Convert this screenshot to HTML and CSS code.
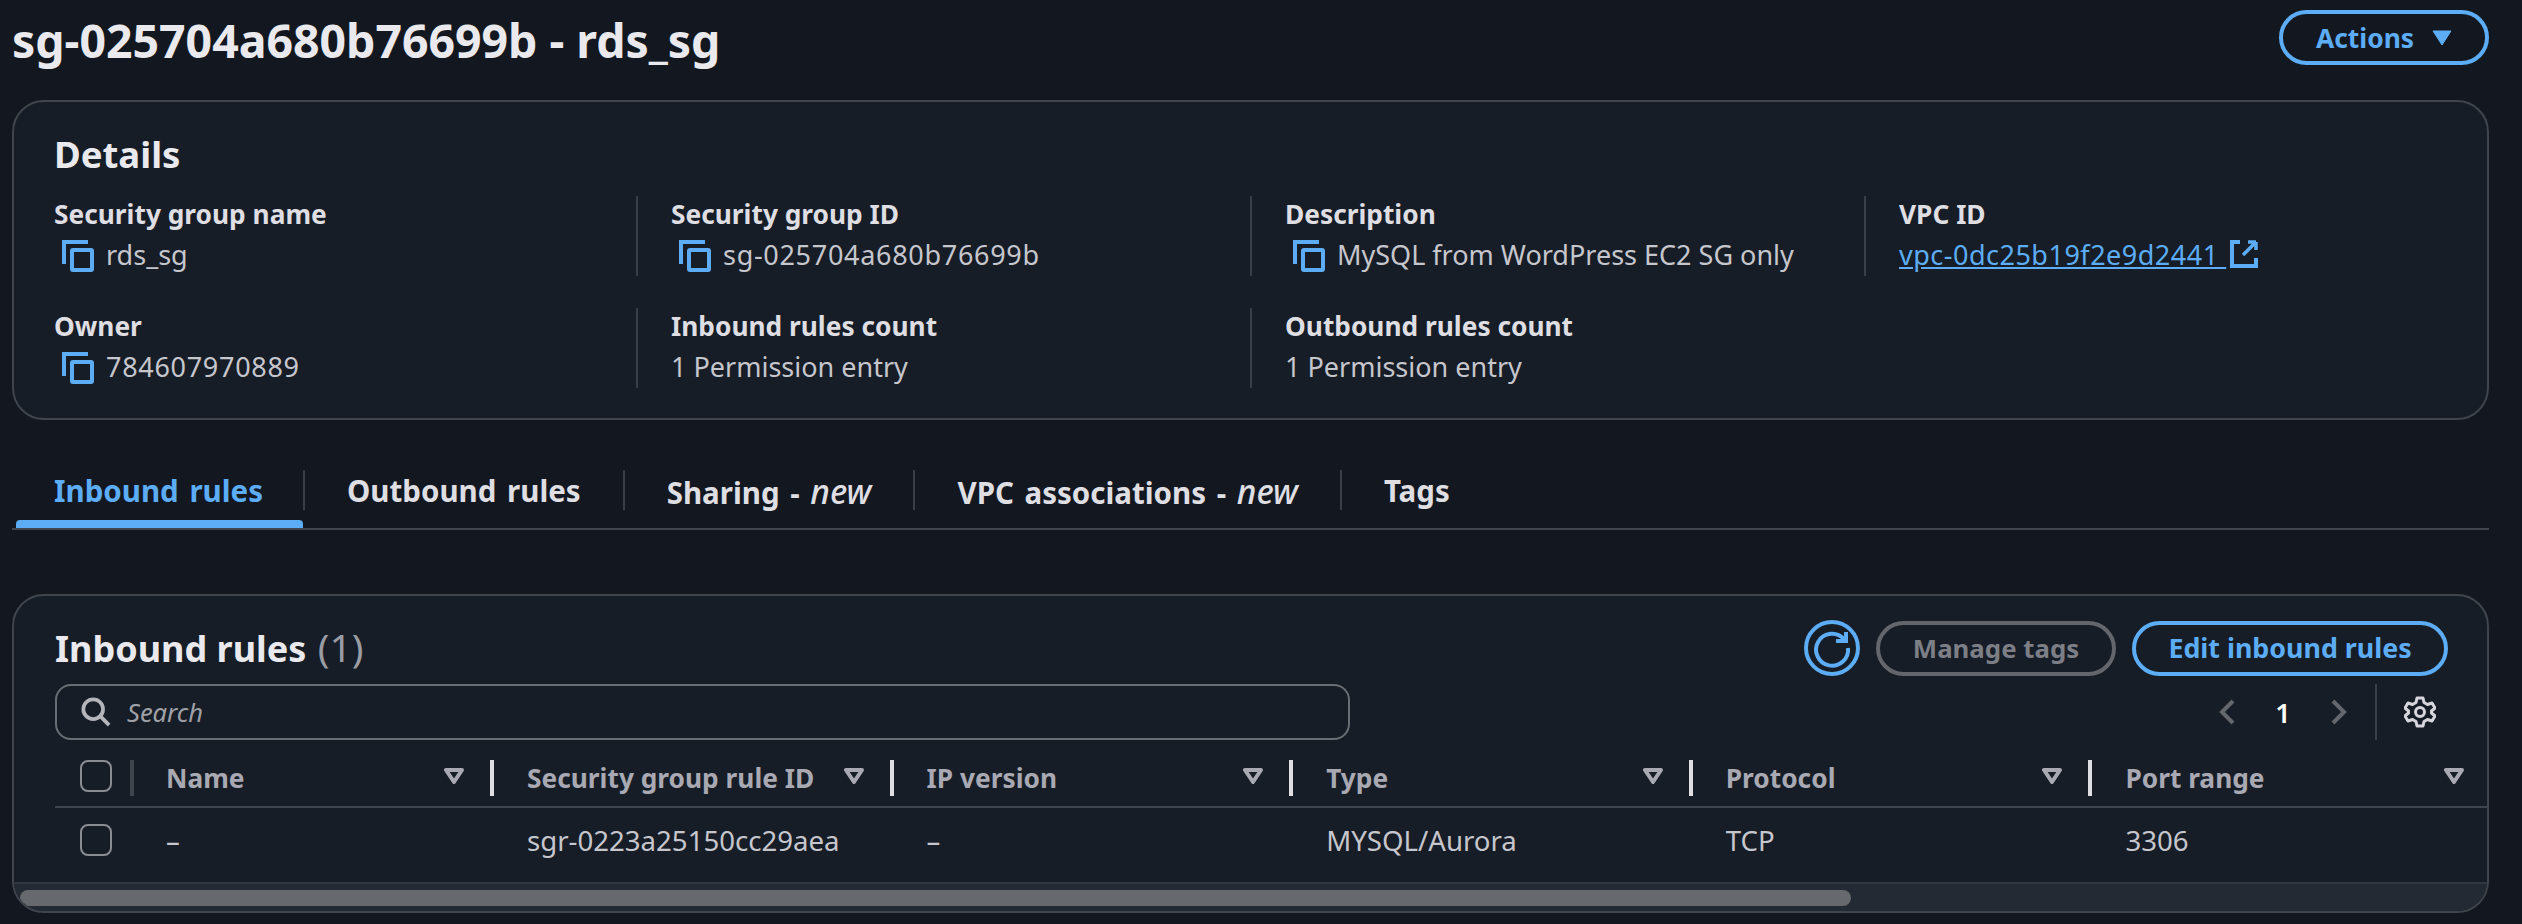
FILE: index.html
```html
<!DOCTYPE html>
<html lang="en">
<head>
<meta charset="utf-8">
<title>rds_sg</title>
<link rel="stylesheet" href="styles.css">
</head>
<body>
<svg class="defs" width="0" height="0" aria-hidden="true">
  <symbol id="copy" viewBox="0 0 32 32">
    <path d="M2 24V2H26" fill="none" stroke="currentColor" stroke-width="4"/>
    <rect x="10" y="10" width="20" height="20" rx="1" fill="none" stroke="currentColor" stroke-width="4"/>
  </symbol>
  <symbol id="sort" viewBox="0 0 20 16">
    <path d="M2 2H18L10 14Z" fill="none" stroke="currentColor" stroke-width="4" stroke-linejoin="round"/>
  </symbol>
</svg>
<main class="page">
  <header class="title-row">
    <h1 class="page-title">sg-025704a680b76699b - rds_sg</h1>
    <button class="btn btn-primary btn-actions">Actions
      <svg class="caret" viewBox="0 0 20 16"><path d="M1 1H19L10 15Z" fill="currentColor" stroke="currentColor" stroke-linejoin="round"/></svg>
    </button>
  </header>

  <section class="card details">
    <h2 class="card-title">Details</h2>
    <div class="kv-grid">
      <div class="kv"><div class="kv-label">Security group name</div><div class="kv-value"><svg class="copy"><use href="#copy"/></svg>rds_sg</div></div>
      <div class="kv"><div class="kv-label">Security group ID</div><div class="kv-value num"><svg class="copy"><use href="#copy"/></svg>sg-025704a680b76699b</div></div>
      <div class="kv"><div class="kv-label">Description</div><div class="kv-value"><svg class="copy"><use href="#copy"/></svg>MySQL from WordPress EC2 SG only</div></div>
      <div class="kv kv-last"><div class="kv-label">VPC ID</div><div class="kv-value num"><a class="link" href="#">vpc-0dc25b19f2e9d2441 </a><svg class="ext" viewBox="0 0 28 28"><path d="M10 2H2V26H26V18M2 26" fill="none" stroke="currentColor" stroke-width="4"/><path d="M26 2V10M26 2H18M26 2L13 15" fill="none" stroke="currentColor" stroke-width="3.5"/></svg></div></div>
      <div class="kv"><div class="kv-label">Owner</div><div class="kv-value num"><svg class="copy"><use href="#copy"/></svg>784607970889</div></div>
      <div class="kv"><div class="kv-label">Inbound rules count</div><div class="kv-value">1 Permission entry</div></div>
      <div class="kv"><div class="kv-label">Outbound rules count</div><div class="kv-value">1 Permission entry</div></div>
    </div>
  </section>

  <nav class="tabs">
    <a class="tab tab-active"><span class="tab-label">Inbound rules</span></a>
    <a class="tab"><span class="tab-label">Outbound rules</span></a>
    <a class="tab"><span class="tab-label">Sharing - <em>new</em></span></a>
    <a class="tab"><span class="tab-label">VPC associations - <em>new</em></span></a>
    <a class="tab tab-end"><span class="tab-label">Tags</span></a>
  </nav>

  <section class="card rules">
    <div class="rules-head">
      <div class="head-row">
        <h2 class="card-title table-title">Inbound rules <span class="count">(1)</span></h2>
        <div class="actions">
          <button class="icon-btn" aria-label="Refresh"><svg viewBox="0 0 56 56" width="56" height="56"><ellipse cx="28" cy="28" rx="26" ry="26" fill="none" stroke="currentColor" stroke-width="4"/><path d="M40 19A16 16 0 1 0 44 28" fill="none" stroke="currentColor" stroke-width="4"/><path d="M42 12V21H32" fill="none" stroke="currentColor" stroke-width="4"/></svg></button>
          <button class="btn btn-disabled">Manage tags</button>
          <button class="btn btn-primary btn-edit">Edit inbound rules</button>
        </div>
      </div>
      <div class="filter-row">
        <div class="search">
          <svg class="search-icon" viewBox="0 0 32 32"><circle cx="13" cy="13" r="10.5" fill="none" stroke="currentColor" stroke-width="4"/><path d="M21 21L30 30" stroke="currentColor" stroke-width="4"/></svg>
          <span class="search-text">Search</span>
        </div>
        <div class="pager">
          <svg class="chev" viewBox="0 0 16 26"><path d="M14 2L3 13L14 24" fill="none" stroke="currentColor" stroke-width="4"/></svg>
          <span class="page-num">1</span>
          <svg class="chev" viewBox="0 0 16 26"><path d="M2 2L13 13L2 24" fill="none" stroke="currentColor" stroke-width="4"/></svg>
          <span class="gear-cell">
            <svg class="gear" viewBox="0 0 32 32"><path d="M13 2H19L20 6.5L23.5 8.5L28 7L31 12L27.5 15V17L31 20L28 25L23.5 23.5L20 25.500L19 30H13L12 25.500L8.500 23.500L4 25L1 20L4.500 17V15L1 12L4 7L8.500 8.500L12 6.500Z" fill="none" stroke="currentColor" stroke-width="3" stroke-linejoin="round"/><circle cx="16" cy="16" r="4.500" fill="none" stroke="currentColor" stroke-width="3"/></svg>
          </span>
        </div>
      </div>
    </div>

    <div class="table">
      <div class="tr th-row">
        <div class="cell cell-check th-first"><span class="checkbox"></span></div>
        <div class="cell th"><span>Name</span><svg class="sort"><use href="#sort"/></svg></div>
        <div class="cell th"><span>Security group rule ID</span><svg class="sort"><use href="#sort"/></svg></div>
        <div class="cell th"><span>IP version</span><svg class="sort"><use href="#sort"/></svg></div>
        <div class="cell th"><span>Type</span><svg class="sort"><use href="#sort"/></svg></div>
        <div class="cell th"><span>Protocol</span><svg class="sort"><use href="#sort"/></svg></div>
        <div class="cell th th-last"><span>Port range</span><svg class="sort"><use href="#sort"/></svg></div>
      </div>
      <div class="tr td-row">
        <div class="cell cell-check"><span class="checkbox"></span></div>
        <div class="cell td">–</div>
        <div class="cell td">sgr-0223a25150cc29aea</div>
        <div class="cell td">–</div>
        <div class="cell td">MYSQL/Aurora</div>
        <div class="cell td">TCP</div>
        <div class="cell td">3306</div>
      </div>
    </div>
    <div class="scroll-track"><div class="scroll-thumb"></div></div>
  </section>
</main>
</body>
</html>
```

FILE: styles.css
```css
* { box-sizing: border-box; }
html, body { margin: 0; height: 100%; }
body {
  background: #131820;
  color: #dedee3;
  font-family: "Noto Sans", "Open Sans", sans-serif;
  font-size: 27px;
  overflow: hidden;
}
.defs { display: block; height: 0; }
.page { padding: 0 33px 0 12px; }

.title-row { height: 100px; display: flex; justify-content: space-between; align-items: flex-start; }
.page-title { margin: 12px 0 0; font-size: 46.4px; line-height: 56px; font-weight: 700; color: #eaeaee; white-space: nowrap; }

.btn {
  font: 700 26.4px/36px "Noto Sans", sans-serif;
  height: 55px;
  border-radius: 28px;
  background: transparent;
  padding: 0;
  display: flex; align-items: center; justify-content: center;
}
.btn-primary { border: 4px solid #5cadf5; color: #5cadf5; }
.btn-disabled { border: 4px solid #63666c; color: #7d7f86; width: 240px; font-size: 25.8px; }
.btn-actions { margin-top: 10px; width: 210px; gap: 18px; }
.btn-edit { width: 316px; font-size: 26.8px; }
.caret { width: 20px; height: 16px; color: #5cadf5; }

.card { background: #161d26; border: 2px solid #40454d; border-radius: 32px; }
.card-title { margin: 0; font-size: 36.5px; line-height: 44px; font-weight: 700; color: #eaeaee; }
.table-title { font-size: 36px; }
.details { height: 320px; padding: 30px 0 0 40px; }
.kv-grid {
  margin-top: 20px;
  display: grid;
  grid-template-columns: 584px 614px 614px 1fr;
  grid-auto-rows: 80px;
  row-gap: 32px;
}
.kv { border-right: 2px solid #3a3f47; padding-left: 33px; }
.kv:nth-child(4n+1) { padding-left: 0; }
.kv-last { border-right: 0; }
.kv:last-child { border-right: 0; }
.kv-label { font-weight: 700; font-size: 26.3px; line-height: 36px; color: #dedee3; }
.kv-value { display: flex; align-items: center; height: 40px; margin-top: 2px; color: #c6c6cd; white-space: nowrap; }
.num { letter-spacing: .7px; }
.copy { width: 32px; height: 32px; margin: 4px 12px 0 8px; color: #5cadf5; flex: none; }
.link { color: #5cadf5; text-decoration: underline; white-space: pre; letter-spacing: .5px; }
.ext { width: 28px; height: 28px; color: #5cadf5; margin-left: 4px; flex: none; }

.tabs { margin-top: 50px; height: 60px; display: flex; border-bottom: 2px solid #40454d; align-items: flex-start; }
.tab { position: relative; height: 58px; font-weight: 700; font-size: 29.5px; color: #dedee3; }
.tab-label { display: block; height: 40px; line-height: 42px; padding: 0 42px; border-right: 2px solid #3a3f47; white-space: nowrap; word-spacing: 3px; }
.tab-end .tab-label { border-right: 0; }
.tab em { font-weight: 500; font-size: 33.5px; }
.tab-active { color: #5cadf5; }
.tab-active .tab-label { padding-right: 40px; }
.tab-active::after {
  content: ""; position: absolute; left: 4px; right: 2px; bottom: 0; height: 8px;
  background: #5cadf5; border-radius: 4px 4px 0 0;
}

.rules { margin-top: 64px; height: 319px; overflow: hidden; display: flex; flex-direction: column; }
.rules-head { padding: 24px 39px 0 41px; }
.head-row { display: flex; justify-content: space-between; height: 56px; align-items: center; }
.actions { display: flex; gap: 16px; align-items: center; }
.icon-btn { width: 56px; height: 56px; padding: 0; border: 0; background: none; color: #5cadf5; }
.icon-btn svg { display: block; }
.count { font-weight: 400; font-size: 39px; margin-left: 2px; color: #9a9ca3; }

.filter-row { margin-top: 8px; height: 56px; display: flex; justify-content: space-between; }
.search {
  width: 1295px; height: 56px;
  border: 2px solid #6a6d74; border-radius: 16px;
  display: flex; align-items: center; gap: 16px; padding-left: 24px;
}
.search-icon { width: 30px; height: 30px; color: #b4b4bb; }
.search-text { font-style: italic; font-size: 25.5px; color: #a0a1a8; }
.pager { display: flex; align-items: center; height: 56px; color: #63666c; }
.chev { width: 16px; height: 26px; }
.page-num { width: 96px; text-align: center; color: #fff; font-weight: 600; }
.gear-cell { margin-left: 28px; width: 73px; height: 56px; border-left: 2px solid #3a3f47; display: flex; align-items: center; padding-left: 27px; }
.gear { width: 32px; height: 32px; color: #d6d6dc; }

.table { margin-left: 41px; margin-top: 20px; }
.tr { display: grid; grid-template-columns: 78px 361px repeat(5, 399.6px); }
.th-row { height: 48px; align-items: start; border-bottom: 2px solid #40454d; }
.td-row { height: 74px; padding-bottom: 10px; align-items: center; }
.cell-check { padding-left: 25px; }
.checkbox { display: block; width: 32px; height: 32px; border: 2px solid #8a8d93; border-radius: 8px; }
.th-first { height: 36px; border-right: 4px solid #40454d; width: 79px; }
.th {
  height: 36px; padding: 0 26px 0 33px;
  border-right: 4px solid #dedee3;
  display: flex; justify-content: space-between; align-items: center;
  font-weight: 700; font-size: 26.3px; color: #a9a9b3; white-space: nowrap;
}
.th-last { border-right: 0; padding-right: 28px; }
.sort { width: 20px; height: 16px; margin-top: -4px; flex: none; }
.td { padding-left: 33px; color: #c6c6cd; font-size: 27.6px; white-space: nowrap; }

.scroll-track { flex: 1; background: #232a33; border-top: 2px solid #31373f; padding: 6px 0 0 6px; }
.scroll-thumb { width: 1831px; height: 16px; background: #66696d; border-radius: 8px; }
```
